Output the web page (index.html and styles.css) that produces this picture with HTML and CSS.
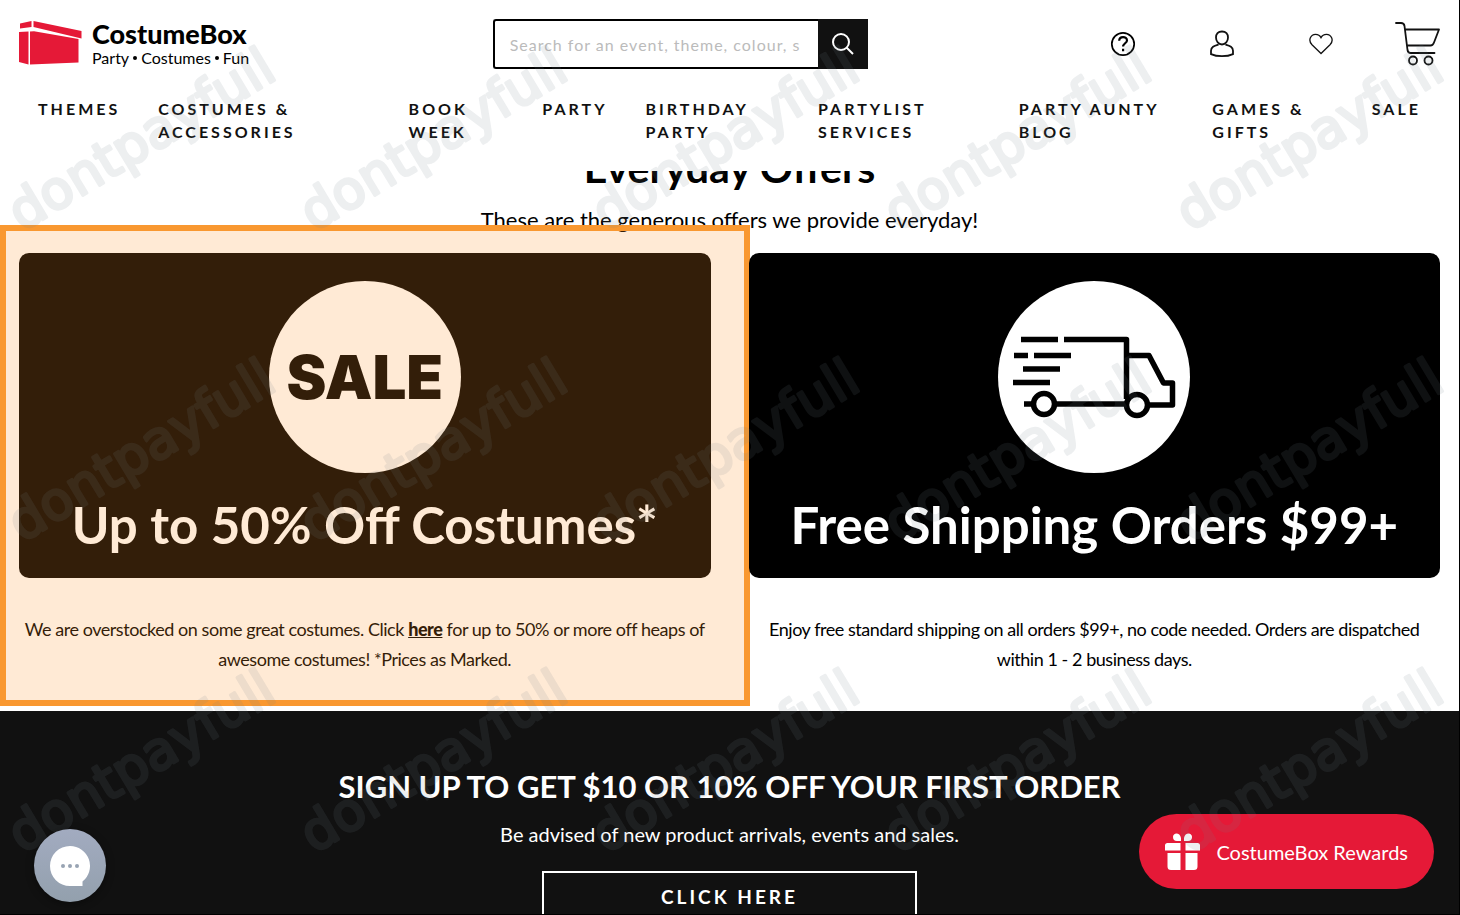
FILE: index.html
```html
<!DOCTYPE html>
<html lang="en">
<head>
  <meta charset="UTF-8" />
  <meta name="viewport" content="width=device-width, initial-scale=1.0"/>
  <title>Everyday Offers – CostumeBox</title>
  <link rel="stylesheet" href="styles.css">
</head>
<body>

  <header class="site-header">
    <div class="header-top">
      <a class="logo" href="#">
        <svg class="logo-box" width="64" height="46" viewBox="0 0 64 46" aria-hidden="true">
          <path fill="#e51937" d="M1 4.500L12.500 2v6L1 9.500zM14.500 2L62.500 12v7.500L14.500 8zM0 13l9.500-.5V45.500L0 43zM11 12.500l4-.3L59.500 20v23.500L11 45.500z"/>
        </svg>
        <span class="logo-text">
          <span class="logo-name">CostumeBox</span>
          <span class="logo-tag">Party<i></i>Costumes<i></i>Fun</span>
        </span>
      </a>

      <form class="search">
        <input type="text" aria-label="Search" placeholder="Search for an event, theme, colour, s" />
        <button type="button" aria-label="Submit search">
          <svg width="24" height="24" viewBox="0 0 24 24" fill="none" stroke="#fff" stroke-width="2">
            <circle cx="10" cy="10" r="8"/>
            <path d="M15.500 15.500L22 22"/>
          </svg>
        </button>
      </form>

      <div class="header-icons">
        <a href="#" aria-label="Help">
          <svg width="26" height="26" viewBox="0 0 26 26" fill="none" stroke="#000" stroke-width="1.700">
            <circle cx="13" cy="13" r="11.200"/>
            <path stroke-width="2.200" d="M9.200 9.800c0-5 7.800-4.600 7.800-.4 0 2.600-3.900 3.200-3.900 6.100M13.100 17.700v2.600"/>
          </svg>
        </a>
        <a href="#" aria-label="Account">
          <svg width="26" height="28" viewBox="0 0 26 28" fill="none" stroke="#111" stroke-width="1.800">
            <path d="M13 1.500c-4 0-6 2.500-6 6 0 3.800 2.500 7 6 7s6-3.200 6-7c0-3.500-2-6-6-6zM9.500 14.500c-4.500 1.400-7.500 2.300-7.500 6.300v3.300c6 2.800 16 2.800 22 0v-3.300c0-4-3-4.900-7.500-6.300"/>
          </svg>
        </a>
        <a href="#" aria-label="Wishlist">
          <svg width="24" height="22" viewBox="0 0 24 22" fill="none" stroke="#111" stroke-width="1.300">
            <path d="M12 20.500L3 11.800C-1.500 7 2 1.300 6.500 1.300c2.500 0 4.500 1.200 5.500 3.300 1-2.100 3-3.300 5.500-3.300C22 1.300 25.500 7 21 11.800z"/>
          </svg>
        </a>
        <a class="cart" href="#" aria-label="Cart">
          <svg width="46" height="46" viewBox="0 0 46 46" fill="none" stroke="#111" stroke-width="1.800" stroke-linecap="round" stroke-linejoin="round">
            <path d="M2 2h5q3 0 3.500 3l3 24q.6 3 3 3h24M11 8.500H45l-5 13q-1 3-3.500 3H13"/>
            <circle cx="19" cy="39.500" r="4"/>
            <circle cx="34.500" cy="39.500" r="4"/>
          </svg>
        </a>
      </div>
    </div>

    <nav class="main-nav">
      <a href="#">Themes</a>
      <a href="#">Costumes &amp; Accessories</a>
      <a href="#">Book Week</a>
      <a href="#">Party</a>
      <a href="#">Birthday Party</a>
      <a href="#">Partylist Services</a>
      <a href="#">Party Aunty Blog</a>
      <a href="#">Games &amp; Gifts</a>
      <a href="#">Sale</a>
    </nav>
  </header>

  <main class="offers">
    <h1>Everyday Offers</h1>
    <p class="offers-intro">These are the generous offers we provide everyday!</p>

    <div class="offer-grid">
      <article class="offer highlighted">
        <div class="banner">
          <div class="banner-circle"><span class="sale">SALE</span></div>
          <h2>Up to 50% Off Costumes*</h2>
        </div>
        <p>We are overstocked on some great costumes. Click <a href="#">here</a> for up to 50% or more off heaps of awesome costumes! *Prices as Marked.</p>
      </article>

      <article class="offer">
        <div class="banner">
          <div class="banner-circle">
            <svg width="192" height="192" viewBox="0 0 192 192" fill="none" stroke="#000" stroke-width="5.500" stroke-linejoin="round" aria-hidden="true">
              <path d="M23 58.500h37M16 74.500h14M36 74.500h37M25 88h37M15 101.500h37M26 123h9M57 123h72M66 58.500h62.500V118M131 74.500h20l14.500 27.500h9v22H150"/>
              <circle cx="46" cy="123" r="10.500"/>
              <circle cx="139" cy="124" r="10.500"/>
            </svg>
          </div>
          <h2>Free Shipping Orders $99+</h2>
        </div>
        <p>Enjoy free standard shipping on all orders $99+, no code needed. Orders are dispatched within 1 - 2 business days.</p>
      </article>
    </div>
  </main>

  <section class="signup">
    <h2>SIGN UP TO GET $10 OR 10% OFF YOUR FIRST ORDER</h2>
    <p>Be advised of new product arrivals, events and sales.</p>
    <button type="button">CLICK HERE</button>
  </section>

  <button class="rewards" type="button">
    <svg width="36" height="38" viewBox="0 0 36 38" fill="#fff" aria-hidden="true">
      <path d="M2.500 10H15.500v7.500H0v-5q0-2.500 2.500-2.500zM20.500 10H32.500q2.500 0 2.500 2.500v5H20.500zM2.500 20h13v17H6q-3.500 0-3.500-3.500zM20.500 20h12v13.500q0 3.500-3.500 3.500h-8.500zM8 4c0-4.500 7-5 8 1v3h-4q-4 0-4-4zM27 4c0-4.500-7-5-8 1v3h4q4 0 4-4z"/>
    </svg>
    CostumeBox Rewards
  </button>

  <svg class="watermark" aria-hidden="true">
    <g transform="translate(22 232)">
      <text transform="rotate(-31)">dontpayfull</text>
      <text transform="translate(292 0) rotate(-31)">dontpayfull</text>
      <text transform="translate(584 0) rotate(-31)">dontpayfull</text>
      <text transform="translate(876 0) rotate(-31)">dontpayfull</text>
      <text transform="translate(1168 0) rotate(-31)">dontpayfull</text>
    </g>
    <g transform="translate(22 543)">
      <text transform="rotate(-31)">dontpayfull</text>
      <text transform="translate(292 0) rotate(-31)">dontpayfull</text>
      <text transform="translate(584 0) rotate(-31)">dontpayfull</text>
      <text transform="translate(876 0) rotate(-31)">dontpayfull</text>
      <text transform="translate(1168 0) rotate(-31)">dontpayfull</text>
    </g>
    <g transform="translate(22 854)">
      <text transform="rotate(-31)">dontpayfull</text>
      <text transform="translate(292 0) rotate(-31)">dontpayfull</text>
      <text transform="translate(584 0) rotate(-31)">dontpayfull</text>
      <text transform="translate(876 0) rotate(-31)">dontpayfull</text>
      <text transform="translate(1168 0) rotate(-31)">dontpayfull</text>
    </g>
  </svg>

  <button class="chat" type="button" aria-label="Chat">
    <svg width="40" height="40" viewBox="0 0 40 40" aria-hidden="true">
      <path fill="#fff" d="M20 0a20 20 0 0 1 12.500 35.600V40H20a20 20 0 0 1 0-40z"/>
      <g fill="#98a3b3">
        <circle cx="13" cy="20" r="2"/>
        <circle cx="20" cy="20" r="2"/>
        <circle cx="27" cy="20" r="2"/>
      </g>
    </svg>
  </button>

</body>
</html>
```
FILE: styles.css
```css
* {
  box-sizing: border-box;
}

body {
  height: 100vh;
  margin: 0;
  overflow: hidden;
  border-right: 1px solid #000;
  border-bottom: 1px solid #000;
  font-family: Lato, 'Noto Sans', sans-serif;
  background: #fff;
  color: #000;
}

h1, h2, p {
  margin: 0;
}

a {
  color: inherit;
  text-decoration: none;
}

button, input {
  font-family: inherit;
}

button {
  cursor: pointer;
}

/* header */
.site-header {
  position: fixed;
  top: 0;
  left: 0;
  right: 1px;
  height: 171px;
  padding: 19px 19px 0;
  background: #fff;
  z-index: 5;
}

.header-top {
  display: grid;
  grid-template-columns: 1fr 1fr 1fr;
  align-items: center;
}

.logo {
  display: flex;
  align-items: flex-start;
  gap: 9px;
  height: 50px;
}

.logo-text {
  display: flex;
  flex-direction: column;
}

.logo-name {
  font-size: 27px;
  font-weight: 900;
  line-height: 30px;
}

.logo-tag {
  display: flex;
  align-items: center;
  font-size: 16px;
  line-height: 18px;
}

.logo-tag i {
  width: 4px;
  height: 4px;
  margin: 0 4px;
  border-radius: 50%;
  background: #000;
}

.search {
  display: flex;
  width: 375px;
  height: 50px;
}

.search input {
  flex: 1;
  min-width: 0;
  padding: 0 15px;
  border: 2px solid #000;
  border-right: none;
  border-radius: 3px 0 0 3px;
  font-size: 16px;
  letter-spacing: 1px;
  outline: none;
}

.search input::placeholder {
  color: #bbb;
}

.search button {
  display: flex;
  align-items: center;
  justify-content: center;
  width: 50px;
  border: none;
  background: #111;
}

.header-icons {
  display: flex;
  justify-content: flex-end;
  gap: 59px;
}

.header-icons a {
  display: flex;
  align-items: center;
  justify-content: center;
  width: 40px;
}

.header-icons .cart {
  justify-content: flex-end;
}

.header-icons svg {
  flex: none;
}

.main-nav {
  display: flex;
  margin-top: 28px;
}

.main-nav a {
  padding: 0 19px;
  color: #111;
  font-size: 16px;
  font-weight: 700;
  line-height: 23px;
  letter-spacing: 3px;
  text-transform: uppercase;
}

/* offers */
.offers {
  padding: 143px 19px 37px;
  text-align: center;
}

.offers h1 {
  font-size: 41px;
  line-height: 50px;
}

.offers-intro {
  margin-top: 12px;
  font-size: 22px;
  line-height: 30px;
}

.offer-grid {
  display: grid;
  grid-template-columns: 1fr 1fr;
  gap: 38px;
  margin-top: 18px;
}

.offer {
  position: relative;
}

.banner {
  display: flex;
  flex-direction: column;
  align-items: center;
  height: 325px;
  padding-top: 28px;
  border-radius: 10px;
  background: #000;
  color: #fff;
}

.banner-circle {
  display: flex;
  align-items: center;
  justify-content: center;
  width: 192px;
  height: 192px;
  border-radius: 50%;
  background: #fff;
  color: #000;
}

.sale {
  font-family: Inter, sans-serif;
  font-size: 60px;
  font-weight: 900;
}

.banner h2 {
  margin-top: 20px;
  font-size: 51px;
  line-height: 64px;
}

.offer p {
  margin-top: 36px;
  font-size: 18px;
  line-height: 30px;
  letter-spacing: -0.025em;
}

.offer p a {
  font-weight: 900;
  text-decoration: underline;
}

.highlighted::after {
  content: "";
  position: absolute;
  top: -28px;
  left: -19px;
  right: -39px;
  bottom: -32px;
  border: 6px solid #f99830;
  background: rgba(255, 148, 45, 0.2);
  background-clip: padding-box;
  pointer-events: none;
}

/* sign up */
.signup {
  padding: 55px 20px 40px;
  background: #111;
  color: #fff;
  text-align: center;
}

.signup h2 {
  font-size: 31px;
  line-height: 40px;
}

.signup p {
  margin-top: 12px;
  font-size: 20px;
  line-height: 32px;
}

.signup button {
  width: 375px;
  height: 50px;
  margin-top: 21px;
  border: 2px solid #fff;
  background: none;
  color: #fff;
  font-size: 19px;
  font-weight: 700;
  letter-spacing: 3px;
}

/* floating buttons */
.rewards {
  position: fixed;
  right: 26px;
  bottom: 26px;
  display: flex;
  align-items: center;
  gap: 15px;
  height: 75px;
  padding: 0 26px;
  border: none;
  border-radius: 38px;
  background: #e51937;
  color: #fff;
  font-size: 20px;
  z-index: 6;
}

.chat {
  position: fixed;
  left: 34px;
  bottom: 13px;
  display: flex;
  align-items: center;
  justify-content: center;
  width: 72px;
  height: 73px;
  padding: 0;
  border: none;
  border-radius: 50%;
  background: linear-gradient(#a2abc0, #93a0ad);
  box-shadow: 0 2px 8px rgba(0, 0, 0, 0.4);
  z-index: 8;
}

.watermark {
  position: fixed;
  top: 0;
  left: 0;
  width: 100%;
  height: 100%;
  opacity: 0.13;
  pointer-events: none;
  z-index: 7;
}

.watermark text {
  fill: #73828c;
  stroke: #73828c;
  stroke-width: 3;
  stroke-linejoin: round;
  font-family: 'DejaVu Sans', sans-serif;
  font-size: 53px;
}
```
